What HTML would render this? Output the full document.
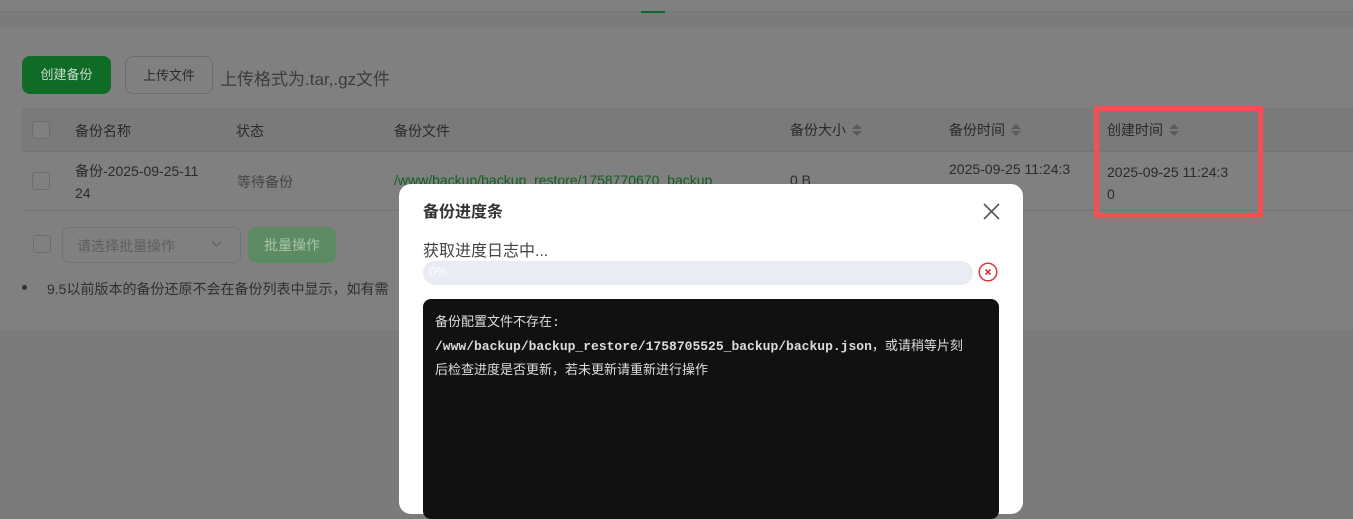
<!DOCTYPE html>
<html><head><meta charset="utf-8"><style>
*{margin:0;padding:0;box-sizing:border-box}
body{width:1353px;height:501px;overflow:hidden;background:#7b7b7b;font-family:"Liberation Sans","Noto Sans CJK SC",sans-serif;font-size:14px;color:#2a2a2a;position:relative}
.abs{position:absolute}
.top{left:0;top:0;width:1353px;height:12px;background:#808080;border-bottom:1px solid #767676}
.card{left:0;top:28px;width:1353px;height:302px;background:#808080}
.btn{border-radius:8px;height:38px;line-height:38px;text-align:center;font-size:13px}
.th{left:22px;top:108px;width:1331px;height:44px;background:#7a7a7a;border-bottom:1px solid #737373}
.cb{width:18px;height:18px;border:1px solid #6d6d6d;border-radius:3px;background:#808080}
.t{position:absolute;white-space:nowrap}
.sort{display:inline-block;vertical-align:middle;margin-left:6px;width:10px;height:12px;position:relative;top:-1px}
.sort:before{content:"";position:absolute;left:0;top:0;border:5px solid transparent;border-top:0;border-bottom:5px solid #5a5a5a}
.sort:after{content:"";position:absolute;left:0;top:7px;border:5px solid transparent;border-bottom:0;border-top:5px solid #5a5a5a}
</style></head><body>
<div class="abs top"></div>
<div class="abs" style="left:641px;top:11px;width:24px;height:2px;background:#0d6b22"></div>
<div class="abs card"></div>
<div class="abs btn" style="left:22px;top:56px;width:89px;background:#0f6b26;color:#c9dccd">创建备份</div>
<div class="abs btn" style="left:125px;top:56px;width:88px;border:1px solid #6c6c6c;color:#2a2a2a">上传文件</div>
<div class="t" style="left:220px;top:65px;font-size:17px;color:#3c3c3c">上传格式为.tar,.gz文件</div>
<div class="abs th"></div>
<div class="abs cb" style="left:32px;top:121px"></div>
<div class="t" style="left:75px;top:121px">备份名称</div>
<div class="t" style="left:236px;top:121px">状态</div>
<div class="t" style="left:394px;top:121px">备份文件</div>
<div class="t" style="left:790px;top:120px">备份大小<span class="sort"></span></div>
<div class="t" style="left:949px;top:120px">备份时间<span class="sort"></span></div>
<div class="t" style="left:1107px;top:120px">创建时间<span class="sort"></span></div>
<div class="abs cb" style="left:32px;top:172px"></div>
<div class="t" style="left:75px;top:160px;line-height:22px;font-size:14px">备份-2025-09-25-11<br>24</div>
<div class="t" style="left:237px;top:172px;color:#444">等待备份</div>
<div class="t" style="left:394px;top:172px;color:#0f5f1f;font-size:14px">/www/backup/backup_restore/1758770670_backup</div>
<div class="t" style="left:790px;top:172px;font-size:14px">0 B</div>
<div class="t" style="left:949px;top:161px;font-size:14px">2025-09-25 11:24:3</div>
<div class="t" style="left:1107px;top:161px;font-size:14px;line-height:22px">2025-09-25 11:24:3<br>0</div>
<div class="abs" style="left:22px;top:210px;width:1331px;height:1px;background:#737373"></div>
<div class="abs" style="left:1094px;top:106px;width:169px;height:112px;border:5px solid #f25151;border-radius:2px"></div>
<div class="abs cb" style="left:33px;top:235px"></div>
<div class="abs" style="left:62px;top:227px;width:179px;height:36px;border:1px solid #737373;border-radius:7px"></div>
<div class="t" style="left:77px;top:236px;color:#5e5e5e">请选择批量操作</div>
<svg class="abs" style="left:211px;top:240px" width="11" height="8" viewBox="0 0 11 8"><path d="M1 1.5L5.5 6L10 1.5" fill="none" stroke="#5e5e5e" stroke-width="1.2"/></svg>
<div class="abs btn" style="left:248px;top:227px;width:88px;height:36px;line-height:36px;background:#5c8a62;color:#a8c4ac;font-size:14px">批量操作</div>
<div class="abs" style="left:22px;top:285px;width:5px;height:5px;border-radius:50%;background:#333"></div>
<div class="t" style="left:47px;top:279px;color:#2f2f2f;font-size:14px">9.5以前版本的备份还原不会在备份列表中显示，如有需</div>
<!-- dialog -->
<div class="abs" style="left:399px;top:184px;width:624px;height:330px;background:#fff;border-radius:12px"></div>
<div class="t" style="left:423px;top:198px;font-size:16px;font-weight:bold;color:#333">备份进度条</div>
<svg class="abs" style="left:983px;top:203px" width="17" height="17" viewBox="0 0 17 17"><path d="M1 1L16 16M16 1L1 16" stroke="#555" stroke-width="1.6"/></svg>
<div class="t" style="left:423px;top:237px;font-size:16px;color:#444">获取进度日志中...</div>
<div class="abs" style="left:423px;top:261px;width:550px;height:24px;border-radius:12px;background:#e9ecf3"></div>
<div class="t" style="left:429px;top:264px;font-size:13px;color:#fff">0%</div>
<svg class="abs" style="left:978px;top:262px" width="20" height="20" viewBox="0 0 20 20"><circle cx="10" cy="10" r="8.8" fill="none" stroke="#d9363e" stroke-width="1.5"/><path d="M7.5 7.5L12.5 12.5M12.5 7.5L7.5 12.5" stroke="#d9363e" stroke-width="1.6"/></svg>
<div class="abs" style="left:423px;top:299px;width:576px;height:220px;background:#111;border-radius:8px"></div>
<div class="t" style="left:435px;top:311px;color:#ddd;font-size:13px;line-height:24px;font-family:'Liberation Mono','Noto Sans CJK SC',monospace;white-space:normal;width:560px">备份配置文件不存在:<br><b>/www/backup/backup_restore/1758705525_backup/backup.json</b>，或请稍等片刻<br>后检查进度是否更新，若未更新请重新进行操作</div>
</body></html>
